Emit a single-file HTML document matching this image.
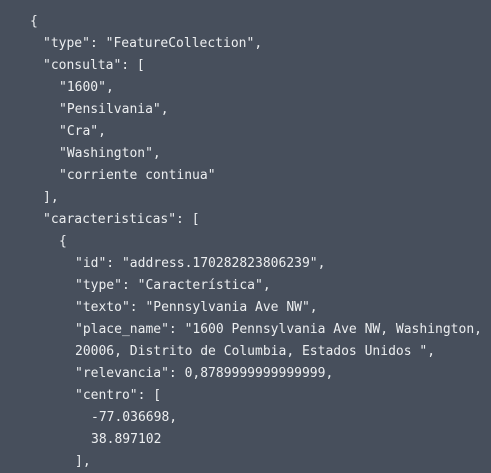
<!DOCTYPE html>
<html><head><style>
html,body{margin:0;padding:0;background:#474f5c;width:491px;height:457px;overflow:hidden}
.l{position:absolute;white-space:pre;font-family:"DejaVu Sans Mono","Liberation Mono",monospace;font-size:13px;color:#eceef0;line-height:22px}
</style></head><body>
<div class="l" style="left:30px;top:11px">{</div>
<div class="l" style="left:43px;top:33px">"type": "FeatureCollection",</div>
<div class="l" style="left:43px;top:55px">"consulta": [</div>
<div class="l" style="left:59px;top:77px">"1600",</div>
<div class="l" style="left:59px;top:99px">"Pensilvania",</div>
<div class="l" style="left:59px;top:121px">"Cra",</div>
<div class="l" style="left:59px;top:143px">"Washington",</div>
<div class="l" style="left:59px;top:165px">"corriente continua"</div>
<div class="l" style="left:43px;top:187px">],</div>
<div class="l" style="left:43px;top:209px">"caracteristicas": [</div>
<div class="l" style="left:59px;top:231px">{</div>
<div class="l" style="left:75px;top:253px">"id": "address.170282823806239",</div>
<div class="l" style="left:75px;top:275px">"type": "Característica",</div>
<div class="l" style="left:75px;top:297px">"texto": "Pennsylvania Ave NW",</div>
<div class="l" style="left:75px;top:319px">"place_name": "1600 Pennsylvania Ave NW, Washington,</div>
<div class="l" style="left:75px;top:341px">20006, Distrito de Columbia, Estados Unidos ",</div>
<div class="l" style="left:75px;top:363px">"relevancia": 0,8789999999999999,</div>
<div class="l" style="left:75px;top:385px">"centro": [</div>
<div class="l" style="left:91px;top:407px">-77.036698,</div>
<div class="l" style="left:91px;top:429px">38.897102</div>
<div class="l" style="left:75px;top:451px">],</div>
</body></html>
